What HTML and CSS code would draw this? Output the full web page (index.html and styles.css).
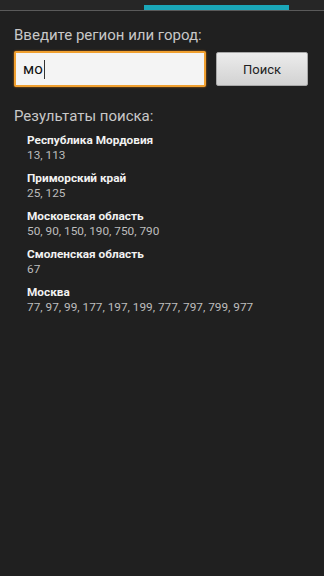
FILE: index.html
```html
<!DOCTYPE html>
<html lang="ru">
<head>
<meta charset="utf-8">
<link rel="stylesheet" href="styles.css">
</head>
<body>
<div class="tabs"><div class="tab-indicator"></div></div>
<main class="content">
  <label class="label">Введите регион или город:</label>
  <div class="search-row">
    <div class="input"><span class="input-text">мо</span><span class="caret"></span></div>
    <button class="btn">Поиск</button>
  </div>
  <div class="results-title">Результаты поиска:</div>
  <ul class="results">
    <li class="item"><div class="name">Республика Мордовия</div><div class="codes">13, 113</div></li>
    <li class="item"><div class="name">Приморский край</div><div class="codes">25, 125</div></li>
    <li class="item"><div class="name">Московская область</div><div class="codes">50, 90, 150, 190, 750, 790</div></li>
    <li class="item"><div class="name">Смоленская область</div><div class="codes">67</div></li>
    <li class="item"><div class="name">Москва</div><div class="codes">77, 97, 99, 177, 197, 199, 777, 797, 799, 977</div></li>
  </ul>
</main>
</body>
</html>
```
FILE: styles.css
```css
html, body {
  margin: 0;
  padding: 0;
  background: #202020;
  font-family: Roboto, "Noto Sans", sans-serif;
  width: 324px;
  height: 576px;
  overflow: hidden;
}
.tabs {
  height: 10px;
  background: #262626;
  border-bottom: 1px solid #5a5a5a;
  position: relative;
}
.tab-indicator {
  position: absolute;
  left: 144px;
  width: 145px;
  bottom: 0;
  height: 5px;
  background: #1aa6b8;
}
.content {
  padding: 0 14px;
}
.label {
  display: block;
  margin-top: 14px;
  font-size: 15px;
  line-height: 20px;
  color: #c8c8c8;
}
.search-row {
  display: flex;
  align-items: center;
  margin-top: 6px;
  gap: 10px;
}
.input {
  box-sizing: border-box;
  width: 192px;
  height: 36px;
  background: #f4f4f4;
  border: 2px solid #f0a030;
  border-radius: 2px;
  box-shadow: 0 0 2px #c87010;
  display: flex;
  align-items: center;
  padding-left: 7px;
}
.input-text {
  font-size: 15px;
  color: #111;
}
.caret {
  width: 1px;
  height: 19px;
  background: #333;
  margin-left: 1px;
}
.btn {
  box-sizing: border-box;
  width: 92px;
  height: 34px;
  border: 1px solid #a8a8a8;
  border-radius: 2px;
  background: linear-gradient(#ececec, #d2d2d2);
  font-family: Roboto, "Noto Sans", sans-serif;
  font-size: 13px;
  color: #222;
  padding: 0;
}
.results-title {
  margin-top: 19px;
  font-size: 15px;
  line-height: 20px;
  color: #c8c8c8;
}
.results {
  list-style: none;
  margin: 7px 0 0;
  padding: 0 0 0 13px;
}
.item {
  margin-bottom: 8px;
}
.name {
  font-size: 11.8px;
  font-weight: bold;
  color: #f2f2f2;
  line-height: 15px;
}
.codes {
  font-size: 11.8px;
  color: #bdbdbd;
  line-height: 15px;
}
```
